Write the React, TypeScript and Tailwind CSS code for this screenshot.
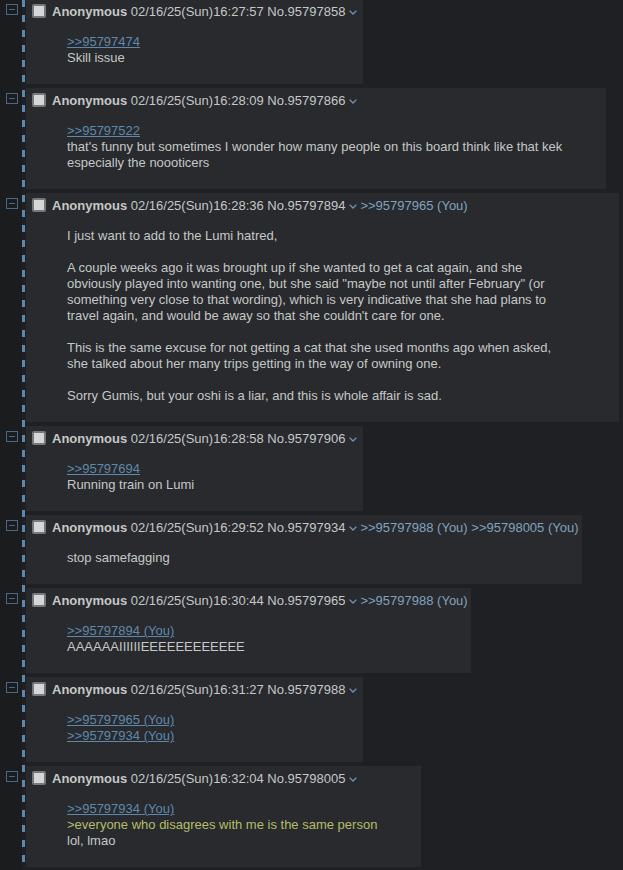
import React from 'react'

type Seg = { t: 'text' | 'quote' | 'green'; s: string }
type Post = {
  no: string
  time: string
  backlinks?: string[]
  lines: Seg[][]
}

const q = (s: string): Seg[] => [{ t: 'quote', s }]
const tx = (s: string): Seg[] => [{ t: 'text', s }]
const gr = (s: string): Seg[] => [{ t: 'green', s }]
const blank: Seg[] = []

const posts: Post[] = [
  { no: '95797858', time: '16:27:57', lines: [q('>>95797474'), tx('Skill issue')] },
  {
    no: '95797866',
    time: '16:28:09',
    lines: [
      q('>>95797522'),
      tx("that's funny but sometimes I wonder how many people on this board think like that kek"),
      tx('especially the noooticers'),
    ],
  },
  {
    no: '95797894',
    time: '16:28:36',
    backlinks: ['>>95797965 (You)'],
    lines: [
      tx('I just want to add to the Lumi hatred,'),
      blank,
      tx(
        'A couple weeks ago it was brought up if she wanted to get a cat again, and she obviously played into wanting one, but she said "maybe not until after February" (or something very close to that wording), which is very indicative that she had plans to travel again, and would be away so that she couldn\'t care for one.'
      ),
      blank,
      tx(
        'This is the same excuse for not getting a cat that she used months ago when asked, she talked about her many trips getting in the way of owning one.'
      ),
      blank,
      tx('Sorry Gumis, but your oshi is a liar, and this is whole affair is sad.'),
    ],
  },
  { no: '95797906', time: '16:28:58', lines: [q('>>95797694'), tx('Running train on Lumi')] },
  {
    no: '95797934',
    time: '16:29:52',
    backlinks: ['>>95797988 (You)', '>>95798005 (You)'],
    lines: [tx('stop samefagging')],
  },
  {
    no: '95797965',
    time: '16:30:44',
    backlinks: ['>>95797988 (You)'],
    lines: [q('>>95797894 (You)'), tx('AAAAAAIIIIIIEEEEEEEEEEEE')],
  },
  { no: '95797988', time: '16:31:27', lines: [q('>>95797965 (You)'), q('>>95797934 (You)')] },
  {
    no: '95798005',
    time: '16:32:04',
    lines: [q('>>95797934 (You)'), gr('>everyone who disagrees with me is the same person'), tx('lol, lmao')],
  },
]

const MinusBox = () => (
  <svg width="12" height="11" viewBox="0 0 12 11" className="block">
    <rect x="0.5" y="0.5" width="11" height="10" fill="none" stroke="#4a6886" />
    <line x1="3" y1="5.5" x2="9" y2="5.5" stroke="#4a6886" />
  </svg>
)

const Chevron = () => (
  <svg width="8" height="5" viewBox="0 0 8 5" className="block">
    <path d="M0.6 0.6 L4 4 L7.4 0.6" fill="none" stroke="#6f96ba" strokeWidth="1.3" />
  </svg>
)

const PostCard = ({ post }: { post: Post }) => (
  <div className="w-fit bg-[#282a2e] p-[2px]">
    <div className="mt-[3px] ml-[4px] pr-[1px] h-[16px] whitespace-nowrap">
      <span className="inline-block w-[14px] h-[14px] rounded-[2px] border-2 border-[#77787c] bg-[#d6d6d6] align-[-2px] mr-[6px]" />
      <span className="font-bold">Anonymous</span> 02/16/25(Sun){post.time} No.{post.no}
      <span className="inline-flex w-[15px] h-[16px] items-center justify-center align-top">
        <Chevron />
      </span>
      {post.backlinks?.map((b, i) => (
        <React.Fragment key={b}>
          {i > 0 && ' '}
          <span className="text-[#81a2be]">{b}</span>
        </React.Fragment>
      ))}
    </div>
    <div className="mt-[14px] mb-[16px] ml-[39px] mr-[42px]">
      {post.lines.map((line, i) => (
        <div key={i} className="min-h-[16px]">
          {line.map((seg, j) =>
            seg.t === 'quote' ? (
              <a key={j} className="text-[#5f89ac] underline">
                {seg.s}
              </a>
            ) : seg.t === 'green' ? (
              <span key={j} className="text-[#b5bd68]">
                {seg.s}
              </span>
            ) : (
              <span key={j}>{seg.s}</span>
            )
          )}
        </div>
      ))}
    </div>
  </div>
)

const App = () => {
  return (
    <div className="min-h-screen bg-[#1f2023] text-[#c5c8c6] text-[13px] leading-[16px] font-['Liberation_Sans',Arial,sans-serif] overflow-hidden">
      <div className="-mt-px">
        {posts.map((p) => (
          <div key={p.no} className="flex">
            <div className="w-[22px] shrink-0 bg-[#1b1c1e] pt-[5px] pl-[6px]">
              <MinusBox />
            </div>
            <div className="w-[3px] shrink-0 bg-fixed bg-[image:repeating-linear-gradient(to_bottom,#5b88ae_0px,#5b88ae_7px,transparent_7px,transparent_15px)]" />
            <div className="w-px shrink-0" />
            <div className="flex-1 min-w-0 pr-[4px] pb-[4px]">
              <PostCard post={p} />
            </div>
          </div>
        ))}
        <div className="flex h-[40px]">
          <div className="w-[22px] shrink-0 bg-[#1b1c1e]" />
          <div className="w-[3px] shrink-0 bg-fixed bg-[image:repeating-linear-gradient(to_bottom,#5b88ae_0px,#5b88ae_7px,transparent_7px,transparent_15px)]" />
        </div>
      </div>
    </div>
  )
}

export default App
